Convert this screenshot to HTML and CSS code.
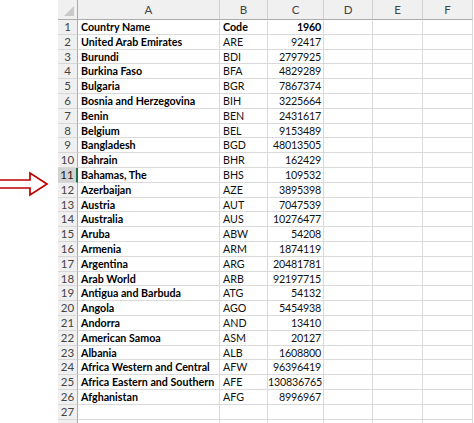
FILE: index.html
```html
<!DOCTYPE html>
<html>
<head>
  <meta charset="utf-8">
  <title>Population 1960</title>
  <link rel="stylesheet" href="styles.css">
</head>
<body>

<svg class="pointer" width="50" height="26" viewBox="0 0 50 26">
  <path d="M-2 9 H30 V2 L47 13 L30 24 V17 H-2" fill="#fff" stroke="#c00000" stroke-width="1.7" stroke-linejoin="miter"/>
</svg>

<div class="sheet">
  <div class="row head">
    <div class="corner"><span class="tri"></span></div>
    <div class="col">A</div><div class="col">B</div><div class="col">C</div><div class="col">D</div><div class="col">E</div><div class="col">F</div>
  </div>
  <div class="row"><div class="num">1</div><div class="c name">Country Name</div><div class="c code bold">Code</div><div class="c val bold">1960</div><div class="c"></div><div class="c"></div><div class="c"></div></div>
  <div class="row"><div class="num">2</div><div class="c name">United Arab Emirates</div><div class="c code">ARE</div><div class="c val">92417</div><div class="c"></div><div class="c"></div><div class="c"></div></div>
  <div class="row"><div class="num">3</div><div class="c name">Burundi</div><div class="c code">BDI</div><div class="c val">2797925</div><div class="c"></div><div class="c"></div><div class="c"></div></div>
  <div class="row"><div class="num">4</div><div class="c name">Burkina Faso</div><div class="c code">BFA</div><div class="c val">4829289</div><div class="c"></div><div class="c"></div><div class="c"></div></div>
  <div class="row"><div class="num">5</div><div class="c name">Bulgaria</div><div class="c code">BGR</div><div class="c val">7867374</div><div class="c"></div><div class="c"></div><div class="c"></div></div>
  <div class="row"><div class="num">6</div><div class="c name">Bosnia and Herzegovina</div><div class="c code">BIH</div><div class="c val">3225664</div><div class="c"></div><div class="c"></div><div class="c"></div></div>
  <div class="row"><div class="num">7</div><div class="c name">Benin</div><div class="c code">BEN</div><div class="c val">2431617</div><div class="c"></div><div class="c"></div><div class="c"></div></div>
  <div class="row"><div class="num">8</div><div class="c name">Belgium</div><div class="c code">BEL</div><div class="c val">9153489</div><div class="c"></div><div class="c"></div><div class="c"></div></div>
  <div class="row"><div class="num">9</div><div class="c name">Bangladesh</div><div class="c code">BGD</div><div class="c val">48013505</div><div class="c"></div><div class="c"></div><div class="c"></div></div>
  <div class="row"><div class="num">10</div><div class="c name">Bahrain</div><div class="c code">BHR</div><div class="c val">162429</div><div class="c"></div><div class="c"></div><div class="c"></div></div>
  <div class="row"><div class="num sel">11</div><div class="c name">Bahamas, The</div><div class="c code">BHS</div><div class="c val">109532</div><div class="c"></div><div class="c"></div><div class="c"></div></div>
  <div class="row"><div class="num">12</div><div class="c name">Azerbaijan</div><div class="c code">AZE</div><div class="c val">3895398</div><div class="c"></div><div class="c"></div><div class="c"></div></div>
  <div class="row"><div class="num">13</div><div class="c name">Austria</div><div class="c code">AUT</div><div class="c val">7047539</div><div class="c"></div><div class="c"></div><div class="c"></div></div>
  <div class="row"><div class="num">14</div><div class="c name">Australia</div><div class="c code">AUS</div><div class="c val">10276477</div><div class="c"></div><div class="c"></div><div class="c"></div></div>
  <div class="row"><div class="num">15</div><div class="c name">Aruba</div><div class="c code">ABW</div><div class="c val">54208</div><div class="c"></div><div class="c"></div><div class="c"></div></div>
  <div class="row"><div class="num">16</div><div class="c name">Armenia</div><div class="c code">ARM</div><div class="c val">1874119</div><div class="c"></div><div class="c"></div><div class="c"></div></div>
  <div class="row"><div class="num">17</div><div class="c name">Argentina</div><div class="c code">ARG</div><div class="c val">20481781</div><div class="c"></div><div class="c"></div><div class="c"></div></div>
  <div class="row"><div class="num">18</div><div class="c name">Arab World</div><div class="c code">ARB</div><div class="c val">92197715</div><div class="c"></div><div class="c"></div><div class="c"></div></div>
  <div class="row"><div class="num">19</div><div class="c name">Antigua and Barbuda</div><div class="c code">ATG</div><div class="c val">54132</div><div class="c"></div><div class="c"></div><div class="c"></div></div>
  <div class="row"><div class="num">20</div><div class="c name">Angola</div><div class="c code">AGO</div><div class="c val">5454938</div><div class="c"></div><div class="c"></div><div class="c"></div></div>
  <div class="row"><div class="num">21</div><div class="c name">Andorra</div><div class="c code">AND</div><div class="c val">13410</div><div class="c"></div><div class="c"></div><div class="c"></div></div>
  <div class="row"><div class="num">22</div><div class="c name">American Samoa</div><div class="c code">ASM</div><div class="c val">20127</div><div class="c"></div><div class="c"></div><div class="c"></div></div>
  <div class="row"><div class="num">23</div><div class="c name">Albania</div><div class="c code">ALB</div><div class="c val">1608800</div><div class="c"></div><div class="c"></div><div class="c"></div></div>
  <div class="row"><div class="num">24</div><div class="c name">Africa Western and Central</div><div class="c code">AFW</div><div class="c val">96396419</div><div class="c"></div><div class="c"></div><div class="c"></div></div>
  <div class="row"><div class="num">25</div><div class="c name">Africa Eastern and Southern</div><div class="c code">AFE</div><div class="c val">130836765</div><div class="c"></div><div class="c"></div><div class="c"></div></div>
  <div class="row"><div class="num">26</div><div class="c name">Afghanistan</div><div class="c code">AFG</div><div class="c val">8996967</div><div class="c"></div><div class="c"></div><div class="c"></div></div>
  <div class="row"><div class="num">27</div><div class="c"></div><div class="c"></div><div class="c"></div><div class="c"></div><div class="c"></div><div class="c"></div></div>
  <div class="row"><div class="num"></div><div class="c"></div><div class="c"></div><div class="c"></div><div class="c"></div><div class="c"></div><div class="c"></div></div>
</div>

</body>
</html>
```

FILE: styles.css
```css
body {
  margin: 0;
  background: #fff;
  font-family: Lato, "Liberation Sans", sans-serif;
  font-size: 10.7px;
  overflow: hidden;
}
.pointer {
  position: absolute;
  left: 0;
  top: 171px;
}
.sheet {
  display: grid;
  grid-template-columns: 20px 142px 48px 56px 49px 50px 50px;
  grid-template-rows: 20px;
  grid-auto-rows: 14.8px;
  margin-left: 58px;
  width: 415px;
}
.row {
  display: contents;
}
.head > div {
  background: #f0f0f0;
  border-bottom: 1px solid #ababab;
  border-right: 1px solid #d0d0d0;
  box-sizing: border-box;
  color: #444;
  text-align: center;
  line-height: 20px;
  font-size: 11.5px;
}
.head .corner {
  position: relative;
  border-right: 1px solid #ababab;
}
.tri {
  position: absolute;
  right: 3px;
  bottom: 3px;
  width: 0;
  height: 0;
  border-left: 10px solid transparent;
  border-bottom: 10px solid #c9c9c9;
}
.num {
  background: #f0f0f0;
  border-right: 1px solid #ababab;
  border-bottom: 1px solid #d8d8d8;
  box-sizing: border-box;
  color: #444;
  text-align: center;
  line-height: 14px;
  font-size: 11.5px;
}
.num.sel {
  background: #d2d2d2;
  border-right: 2px solid #217346;
  color: #222;
}
.c {
  border-right: 1px solid #dadada;
  border-bottom: 1px solid #dadada;
  box-sizing: border-box;
  padding: 0 2px 0 3px;
  line-height: 14px;
  white-space: nowrap;
  overflow: hidden;
  color: #111;
}
.name, .bold {
  font-weight: bold;
  color: #000;
}
.val {
  text-align: right;
  padding-left: 0;
  letter-spacing: -0.2px;
  overflow: visible;
}
```
